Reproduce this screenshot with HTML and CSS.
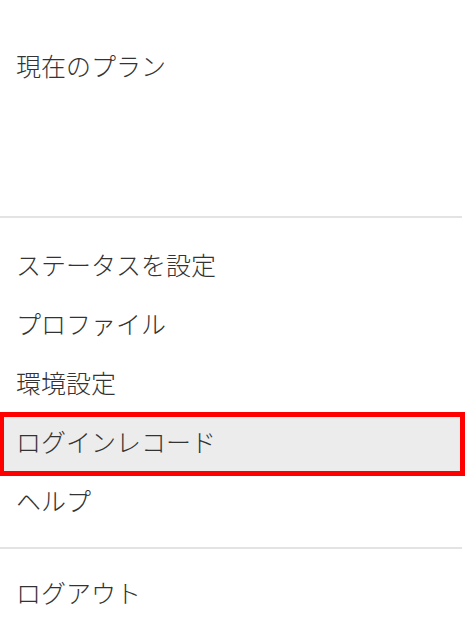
FILE: index.html
```html
<!DOCTYPE html>
<html lang="ja">
<head>
<meta charset="utf-8">
<title>メニュー</title>
<link rel="stylesheet" href="styles.css">
</head>
<body>
<div class="menu">
  <section class="plan">
    <div class="item">現在のプラン</div>
  </section>
  <hr class="divider">
  <ul class="list">
    <li class="item">ステータスを設定</li>
    <li class="item">プロファイル</li>
    <li class="item">環境設定</li>
    <li class="item active"><span class="label">ログインレコード</span></li>
    <li class="item">ヘルプ</li>
  </ul>
  <hr class="divider">
  <ul class="list logout">
    <li class="item">ログアウト</li>
  </ul>
</div>
</body>
</html>
```

FILE: styles.css
```css
html, body {
  margin: 0;
  padding: 0;
  background: #ffffff;
}

body {
  font-family: "Noto Sans CJK JP", "Noto Sans", sans-serif;
  font-weight: 300;
  color: #333333;
}

.menu {
  width: 462px;
}

.item {
  height: 59px;
  line-height: 59px;
  padding-left: 16px;
  font-size: 25px;
  white-space: nowrap;
}

.plan {
  padding: 36px 0 121px;
}

.divider {
  margin: 0;
  border: 0;
  height: 2px;
  background: #e3e3e3;
}

.list {
  list-style: none;
  margin: 0;
  padding: 17px 0 17px;
}

.list.logout {
  padding: 14px 0 0;
}

.active {
  position: relative;
}

.active::before {
  content: "";
  position: absolute;
  left: 0;
  top: 0;
  right: -3px;
  bottom: -5px;
  background: #ececec;
  border-style: solid;
  border-color: #ff0000;
  border-width: 5px 5px 5px 4px;
}

.active .label {
  position: relative;
}
```
